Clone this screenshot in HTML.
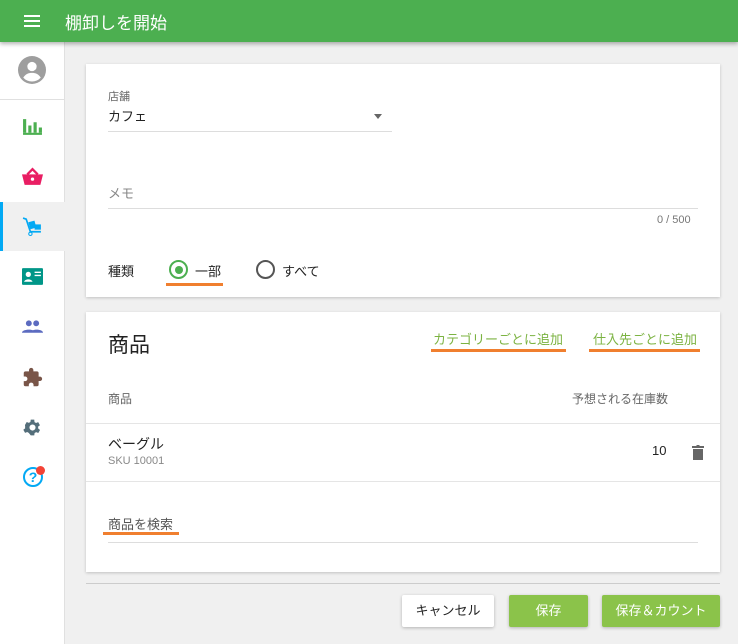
<!DOCTYPE html><html><head><meta charset="utf-8"><style>
*{box-sizing:border-box;margin:0;padding:0}
body{width:738px;height:644px;background:#f0f0f0;font-family:"Liberation Sans","Noto Sans CJK JP",sans-serif;position:relative;overflow:hidden;color:#222}
.a{position:absolute}
.hdr{left:0;top:0;width:738px;height:42px;background:#4caf50;box-shadow:0 2px 4px rgba(0,0,0,.3);z-index:2}
.side{left:0;top:42px;width:65px;height:602px;background:#fff;border-right:1px solid #e0e0e0}
.card{background:#fff;box-shadow:0 1px 3px rgba(0,0,0,.2)}
.ic{position:absolute;left:22px;width:21px;height:21px}
.t{position:absolute;white-space:nowrap}
.ul{position:absolute;height:3px;background:#f07f2f}
.btn{position:absolute;top:595px;height:32px;font-size:13px;text-align:center;line-height:32px;border-radius:2px;box-shadow:0 1px 3px rgba(0,0,0,.25)}
</style></head><body>
<div class="a hdr">
<div class="a" style="left:24px;top:15px;width:16px;height:2px;background:#fff;box-shadow:0 5px 0 #fff,0 10px 0 #fff"></div>
<div class="t" style="left:65px;top:9px;color:#fff;font-size:17px">棚卸しを開始</div>
</div>
<div class="a side">
<svg class="a" style="left:18px;top:14px" width="28" height="28" viewBox="0 0 24 24"><circle cx="12" cy="12" r="12" fill="#9e9e9e"/><circle cx="12" cy="9" r="4" fill="#fff"/><path d="M4.5 18.5c2-3 4.5-4 7.5-4s5.5 1 7.5 4A10 10 0 0 1 4.5 18.5z" fill="#fff"/></svg>
<div class="a" style="left:0;top:57px;width:65px;height:1px;background:#e0e0e0"></div>
<svg class="ic" style="top:74px" viewBox="0 0 20 20"><path d="M1 3h3v13H1zM6 9h3v7H6zM11 6h3v10h-3zM16 11h3v5h-3z" fill="#4caf50"/><path d="M1 16h18v2H1z" fill="#4caf50"/></svg>
<svg class="ic" style="top:124px" viewBox="0 0 20 20"><path d="M0 8h20l-2.5 10h-15z" fill="#e91e63"/><path d="M5 8l5-5 5 5" stroke="#e91e63" stroke-width="2.2" fill="none"/><circle cx="10" cy="12.5" r="1.6" fill="#fff"/></svg>
<div class="a" style="left:0;top:160px;width:65px;height:49px;background:#f0f0f0"></div>
<div class="a" style="left:0;top:160px;width:3px;height:49px;background:#03a9f4"></div>
<svg class="ic" style="top:174px" viewBox="0 0 20 20"><path d="M1 2l3 1 4 12h10" stroke="#03a9f4" stroke-width="1.6" fill="none"/><rect x="7" y="5" width="6" height="7" fill="#03a9f4" transform="rotate(-15 10 9)"/><rect x="12" y="8" width="6" height="5" fill="#03a9f4"/><circle cx="8" cy="17" r="1.6" fill="none" stroke="#03a9f4"/></svg>
<svg class="ic" style="top:224px" viewBox="0 0 20 20"><rect x="0" y="2" width="20" height="16" rx="1" fill="#009688"/><circle cx="6" cy="8" r="2.5" fill="#fff"/><path d="M2 15c1-3 7-3 8 0z" fill="#fff"/><path d="M12 6h6M12 9h6" stroke="#fff" stroke-width="1.4"/></svg>
<svg class="ic" style="top:274px" viewBox="0 0 20 20"><circle cx="6.5" cy="7" r="2.8" fill="#5c6bc0"/><circle cx="13.5" cy="7" r="2.8" fill="#5c6bc0"/><path d="M0 16c0-4 13-4 13 0zM8 16c0-4 12-4 12 0z" fill="#5c6bc0"/></svg>
<svg class="ic" style="top:325px" viewBox="0 0 24 24"><path d="M20.5 11H19V7a2 2 0 0 0-2-2h-4V3.5a2.5 2.5 0 0 0-5 0V5H4a2 2 0 0 0-2 2v3.8h1.5a2.7 2.7 0 0 1 0 5.4H2V20a2 2 0 0 0 2 2h3.8v-1.5a2.7 2.7 0 0 1 5.4 0V22H17a2 2 0 0 0 2-2v-4h1.5a2.5 2.5 0 0 0 0-5z" fill="#795548"/></svg>
<svg class="ic" style="top:375px" viewBox="0 0 24 24"><path d="M19.4 13a7.5 7.5 0 0 0 0-2l2.1-1.6-2-3.5-2.5 1a7 7 0 0 0-1.7-1L15 3h-4l-.4 2.7a7 7 0 0 0-1.7 1l-2.5-1-2 3.5L4.6 11a7.5 7.5 0 0 0 0 2l-2.1 1.6 2 3.5 2.5-1a7 7 0 0 0 1.7 1L11 21h4l.4-2.7a7 7 0 0 0 1.7-1l2.5 1 2-3.5zM13 15.5a3.5 3.5 0 1 1 0-7 3.5 3.5 0 0 1 0 7z" fill="#546e7a" transform="translate(-1 0)"/></svg>
<div class="a" style="left:23px;top:425px;width:20px;height:20px;border:2px solid #03a9f4;border-radius:50%;color:#03a9f4;font-size:14px;font-weight:bold;text-align:center;line-height:16px">?</div>
<div class="a" style="left:36px;top:424px;width:9px;height:9px;border-radius:50%;background:#f44336"></div>
</div>

<div class="a card" style="left:86px;top:64px;width:634px;height:233px">
<div class="t" style="left:22px;top:24px;font-size:11px;color:#666">店舗</div>
<div class="t" style="left:22px;top:42px;font-size:13px">カフェ</div>
<div class="a" style="left:288px;top:50px;border:4px solid transparent;border-top:5px solid #666"></div>
<div class="a" style="left:22px;top:67px;width:284px;height:1px;background:#ddd"></div>
<div class="t" style="left:22px;top:119px;font-size:13px;color:#888">メモ</div>
<div class="a" style="left:22px;top:144px;width:590px;height:1px;background:#ddd"></div>
<div class="t" style="left:571px;top:150px;font-size:11px;color:#777">0 / 500</div>
<div class="t" style="left:22px;top:197px;font-size:13px">種類</div>
<div class="a" style="left:83px;top:196px;width:19px;height:19px;border:2px solid #4caf50;border-radius:50%"><div class="a" style="left:3.5px;top:3.5px;width:8px;height:8px;border-radius:50%;background:#4caf50"></div></div>
<div class="t" style="left:109px;top:197px;font-size:13px">一部</div>
<div class="ul" style="left:80px;top:219px;width:57px"></div>
<div class="a" style="left:170px;top:196px;width:19px;height:19px;border:2px solid #555;border-radius:50%"></div>
<div class="t" style="left:196px;top:197px;font-size:13px">すべて</div>
</div>

<div class="a card" style="left:86px;top:312px;width:634px;height:260px">
<div class="t" style="left:22px;top:17px;font-size:21px">商品</div>
<div class="t" style="left:347px;top:17px;font-size:13px;color:#7cb342">カテゴリーごとに追加</div>
<div class="ul" style="left:345px;top:37px;width:135px"></div>
<div class="t" style="left:507px;top:17px;font-size:13px;color:#7cb342">仕入先ごとに追加</div>
<div class="ul" style="left:503px;top:37px;width:111px"></div>
<div class="t" style="left:22px;top:78px;font-size:12px;color:#666">商品</div>
<div class="t" style="left:486px;top:78px;font-size:12px;color:#666">予想される在庫数</div>
<div class="a" style="left:0;top:111px;width:634px;height:1px;background:#e5e5e5"></div>
<div class="t" style="left:22px;top:122px;font-size:14px">ベーグル</div>
<div class="t" style="left:22px;top:143px;font-size:11px;color:#888">SKU 10001</div>
<div class="t" style="left:566px;top:131px;font-size:13px">10</div>
<svg class="a" style="left:605px;top:132px" width="14" height="17" viewBox="0 0 14 17"><path d="M1 2h4l1-1h2l1 1h4v2H1zM2 5h10v11H2z" fill="#666"/></svg>
<div class="a" style="left:0;top:169px;width:634px;height:1px;background:#e5e5e5"></div>
<div class="t" style="left:22px;top:202px;font-size:13px;color:#555">商品を検索</div>
<div class="ul" style="left:17px;top:220px;width:76px"></div>
<div class="a" style="left:22px;top:230px;width:590px;height:1px;background:#ddd"></div>
</div>
<div class="a" style="left:86px;top:583px;width:634px;height:1px;background:#ccc"></div>
<div class="btn" style="left:402px;width:92px;background:#fff;color:#222">キャンセル</div>
<div class="btn" style="left:509px;width:79px;background:#8bc34a;color:#fff">保存</div>
<div class="btn" style="left:602px;width:118px;background:#8bc34a;color:#fff">保存＆カウント</div>
</body></html>
